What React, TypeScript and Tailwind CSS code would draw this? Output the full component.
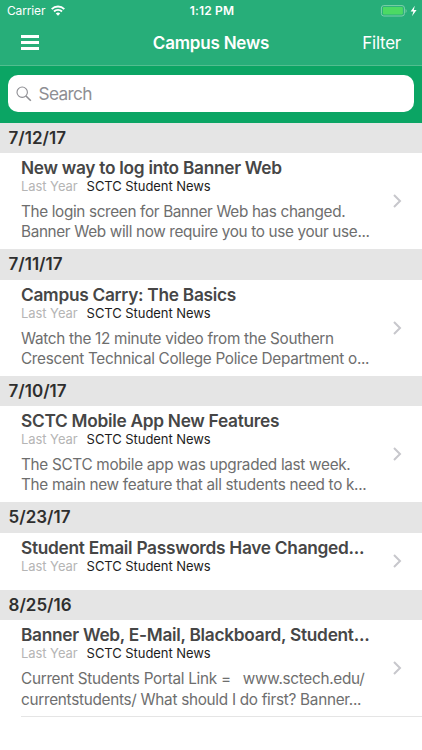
interface NewsItem {
  date: string;
  title: string;
  lines: string[];
  tracking?: string;
}

const news: NewsItem[] = [
  {
    date: "7/12/17",
    title: "New way to log into Banner Web",
    lines: [
      "The login screen for Banner Web has changed.",
      "Banner Web will now require you to use your use...",
    ],
    tracking: "tracking-[-0.345px]",
  },
  {
    date: "7/11/17",
    title: "Campus Carry: The Basics",
    lines: [
      "Watch the 12 minute video from the Southern",
      "Crescent Technical College Police Department o...",
    ],
    tracking: "tracking-[-0.3px]",
  },
  {
    date: "7/10/17",
    title: "SCTC Mobile App New Features",
    lines: [
      "The SCTC mobile app was upgraded last week.",
      "The main new feature that all students need to k...",
    ],
    tracking: "tracking-[-0.3px]",
  },
  {
    date: "5/23/17",
    title: "Student Email Passwords Have Changed...",
    lines: [],
  },
  {
    date: "8/25/16",
    title: "Banner Web, E-Mail, Blackboard, Student...",
    lines: [
      "Current Students Portal Link =   www.sctech.edu/",
      "currentstudents/ What should I do first? Banner...",
    ],
    tracking: "tracking-[-0.28px]",
  },
];

function StatusBar() {
  return (
    <div className="grid h-[21px] grid-cols-3 items-center pl-[7px] pr-[5px] text-[12px] leading-[21px]">
      <div className="flex items-center gap-[6px]">
        <span className="tracking-[-0.15px]">Carrier</span>
        <svg width="14" height="11" viewBox="0 0 14 11" fill="none" stroke="white" strokeWidth="1.9">
          <path d="M0.7 4.1a9 9 0 0 1 12.6 0" />
          <path d="M3 6.5a5.7 5.7 0 0 1 8 0" />
          <path d="M7 10.8L4.8 8.5a3.2 3.2 0 0 1 4.4 0z" fill="white" stroke="none" />
        </svg>
      </div>
      <span className="text-center font-semibold tracking-[0.15px]">1:12 PM</span>
      <svg className="justify-self-end" width="37" height="12" viewBox="0 0 37 12">
        <rect x="1.4" y="0.6" width="23" height="10.4" rx="2.4" fill="none" stroke="#7fd0ab" />
        <rect x="2.9" y="2" width="20" height="7.6" rx="1" fill="#4cd964" />
        <path d="M25.6 4v4c1.3-.6 1.3-3.4 0-4z" fill="#7fd0ab" />
        <path d="M34.8 0.8L30.6 6.4h2.8l-1.4 4.8 4.6-6.2h-2.8z" fill="white" />
      </svg>
    </div>
  );
}

function NavBar() {
  return (
    <div className="grid h-11 grid-cols-3 items-center px-[21px]">
      <button type="button" aria-label="Menu" className="mb-px flex w-[18px] flex-col gap-[3px]">
        <span className="h-[3px] bg-white"></span>
        <span className="h-[3px] bg-white"></span>
        <span className="h-[3px] bg-white"></span>
      </button>
      <h1 className="whitespace-nowrap pt-[2px] text-center text-[17px] font-semibold tracking-[-0.2px]">
        Campus News
      </h1>
      <button type="button" className="justify-self-end pt-[2px] text-[17px] tracking-[-0.25px]">
        Filter
      </button>
    </div>
  );
}

function SearchBar() {
  return (
    <div className="h-[57.7px] border-t border-[#52bd8f] bg-[#0ba564] px-2 pt-[9.4px]">
      <div className="flex h-[37px] items-center gap-[6.5px] rounded-[10px] bg-white pl-2 text-[#8e8e93]">
        <svg width="16" height="16" viewBox="0 0 16 16" fill="none" stroke="currentColor" strokeWidth="1.1">
          <circle cx="6.2" cy="6.2" r="5.2" />
          <path d="M10 10l4.8 4.8" strokeWidth="1.6" />
        </svg>
        <span className="text-[17.3px] leading-[35px] tracking-[-0.7px]">Search</span>
      </div>
    </div>
  );
}

function NewsRow({ item }: { item: NewsItem }) {
  return (
    <section>
      <h2 className="h-[30.5px] bg-[#e5e5e5] pl-[8.5px] text-[17px] font-semibold leading-[31.4px] text-[#2e2e2e]">
        {item.date}
      </h2>
      <div className={`flex items-center justify-between pl-[21px] pr-5 ${item.lines.length ? "h-24" : "h-[57.3px]"}`}>
        <div className="h-full whitespace-pre pt-[4.9px]">
          <h3 className="text-[17.3px] font-semibold leading-5 tracking-[-0.28px] text-[#464646]">{item.title}</h3>
          <div className="flex gap-[9px] text-[13px] leading-4 tracking-[-0.06px]">
            <span className="text-[#b5b5b5]">Last Year</span>
            <span className="text-[#1c1c1c]">SCTC Student News</span>
          </div>
          <div className={`pt-[8px] text-[15.3px] leading-[20.4px] text-[#6e6e6e] ${item.tracking ?? ""}`}>
            {item.lines.map((line) => (
              <p key={line}>{line}</p>
            ))}
          </div>
        </div>
        <svg width="9" height="14" viewBox="0 0 9 14" fill="none" stroke="#c7c7cc" strokeWidth="2">
          <path d="M1 1l6 6-6 6" />
        </svg>
      </div>
    </section>
  );
}

export default function App() {
  return (
    <div className="h-[750px] w-[422px] overflow-hidden bg-white font-['Inter',sans-serif]">
      <header className="bg-[#27ae79] text-white">
        <StatusBar />
        <NavBar />
        <SearchBar />
      </header>
      <main>
        {news.map((item) => (
          <NewsRow key={item.date} item={item} />
        ))}
        <div className="ml-[21px] border-t border-[#e5e5e5]"></div>
      </main>
    </div>
  );
}
